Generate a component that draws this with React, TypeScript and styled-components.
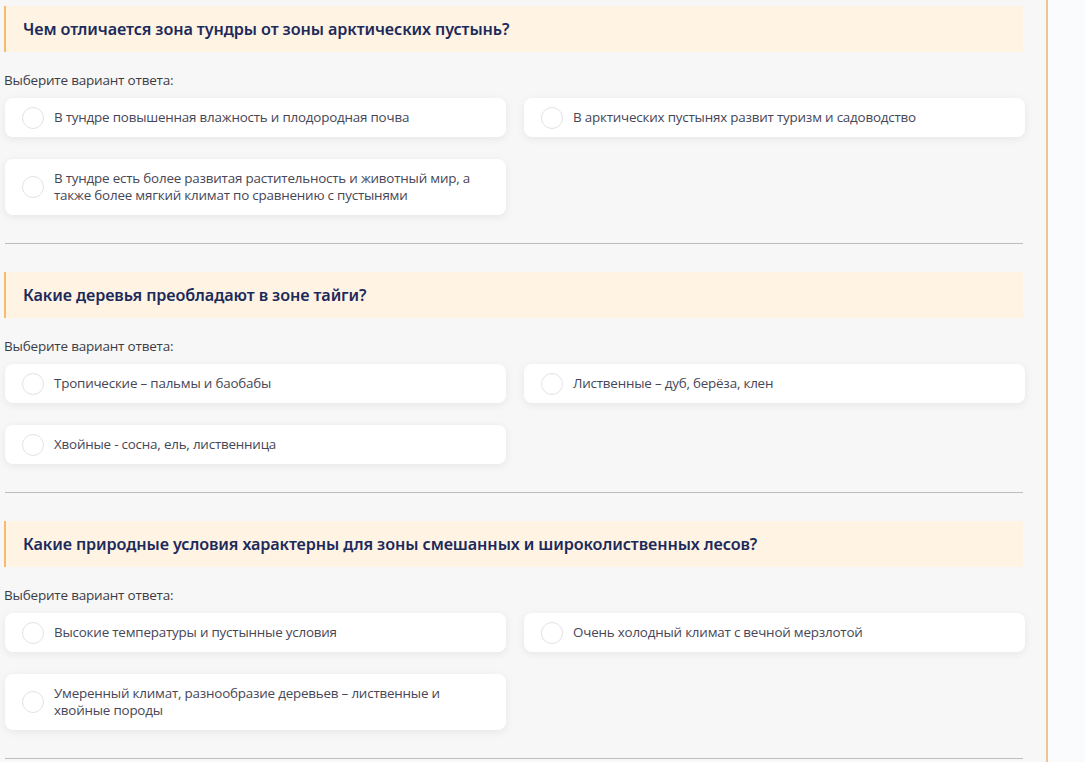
import React from "react";
import styled, { createGlobalStyle } from "styled-components";

const Global = createGlobalStyle`
  html, body { margin: 0; padding: 0; }
  body { background: #fafbfd; font-family: "Open Sans", "Noto Sans", sans-serif; }
`;

const Page = styled.div`
  display: flex;
  height: 762px;
  overflow: hidden;
`;

const Main = styled.main`
  width: 1048px;
  flex: none;
  background: #f7f7f7;
  border-right: 2px solid #ebc68f;
  padding: 6px 23px 0 4px;
  box-sizing: border-box;
  display: flex;
  flex-direction: column;
`;

const Side = styled.aside`
  flex: 1;
  background: #fafbfd;
`;

const Section = styled.section`
  display: flex;
  flex-direction: column;
`;

const QuestionHeader = styled.div`
  background: #fff3e4;
  border-left: 2px solid #f6bb6e;
  height: 46px;
  display: flex;
  align-items: center;
  padding-left: 17px;
`;

const QuestionTitle = styled.h2`
  margin: 0;
  font-family: "Noto Sans", sans-serif;
  font-size: 16.2px;
  font-weight: 600;
  color: #1c2a5a;
  letter-spacing: -0.1px;
`;

const Hint = styled.div`
  margin-top: 19px;
  font-size: 13.5px;
  line-height: 18px;
  color: #3c3c46;
  letter-spacing: -0.2px;
`;

const Options = styled.div`
  margin-top: 9px;
  margin-left: 1px;
  display: grid;
  grid-template-columns: 501px 501px;
  column-gap: 18px;
  row-gap: 22px;
  align-items: start;
`;

const Option = styled.label`
  background: #ffffff;
  border-radius: 8px;
  box-shadow: 0 2px 8px rgba(0, 0, 0, 0.07);
  display: flex;
  align-items: center;
  gap: 10px;
  padding: 8px 30px 8px 17px;
  cursor: pointer;
`;

const Radio = styled.span`
  box-sizing: border-box;
  width: 22px;
  height: 22px;
  flex: none;
  border-radius: 50%;
  border: 1.5px solid #e3e3e6;
  background: #fff;
`;

const OptionText = styled.span`
  padding: 3px 0;
  font-size: 13.4px;
  line-height: 17px;
  color: #464656;
  letter-spacing: -0.2px;
`;

const Divider = styled.hr`
  margin: 28px 0 0 1px;
  border: none;
  border-top: 1px solid #bdbdbd;
  height: 0;
`;

const Spacer = styled.div`
  height: 28px;
  flex: none;
`;

type Q = { title: string; options: string[] };

const questions: Q[] = [
  {
    title: "Чем отличается зона тундры от зоны арктических пустынь?",
    options: [
      "В тундре повышенная влажность и плодородная почва",
      "В арктических пустынях развит туризм и садоводство",
      "В тундре есть более развитая растительность и животный мир, а также более мягкий климат по сравнению с пустынями",
    ],
  },
  {
    title: "Какие деревья преобладают в зоне тайги?",
    options: [
      "Тропические – пальмы и баобабы",
      "Лиственные – дуб, берёза, клен",
      "Хвойные - сосна, ель, лиственница",
    ],
  },
  {
    title: "Какие природные условия характерны для зоны смешанных и широколиственных лесов?",
    options: [
      "Высокие температуры и пустынные условия",
      "Очень холодный климат с вечной мерзлотой",
      "Умеренный климат, разнообразие деревьев – лиственные и хвойные породы",
    ],
  },
];

export default function App() {
  return (
    <>
      <Global />
      <Page>
        <Main>
          {questions.map((q, i) => (
            <Section key={i}>
              {i > 0 && <Spacer />}
              <QuestionHeader>
                <QuestionTitle>{q.title}</QuestionTitle>
              </QuestionHeader>
              <Hint>Выберите вариант ответа:</Hint>
              <Options>
                {q.options.map((o, j) => (
                  <Option key={j}>
                    <Radio />
                    <OptionText>{o}</OptionText>
                  </Option>
                ))}
              </Options>
              <Divider />
            </Section>
          ))}
        </Main>
        <Side />
      </Page>
    </>
  );
}
